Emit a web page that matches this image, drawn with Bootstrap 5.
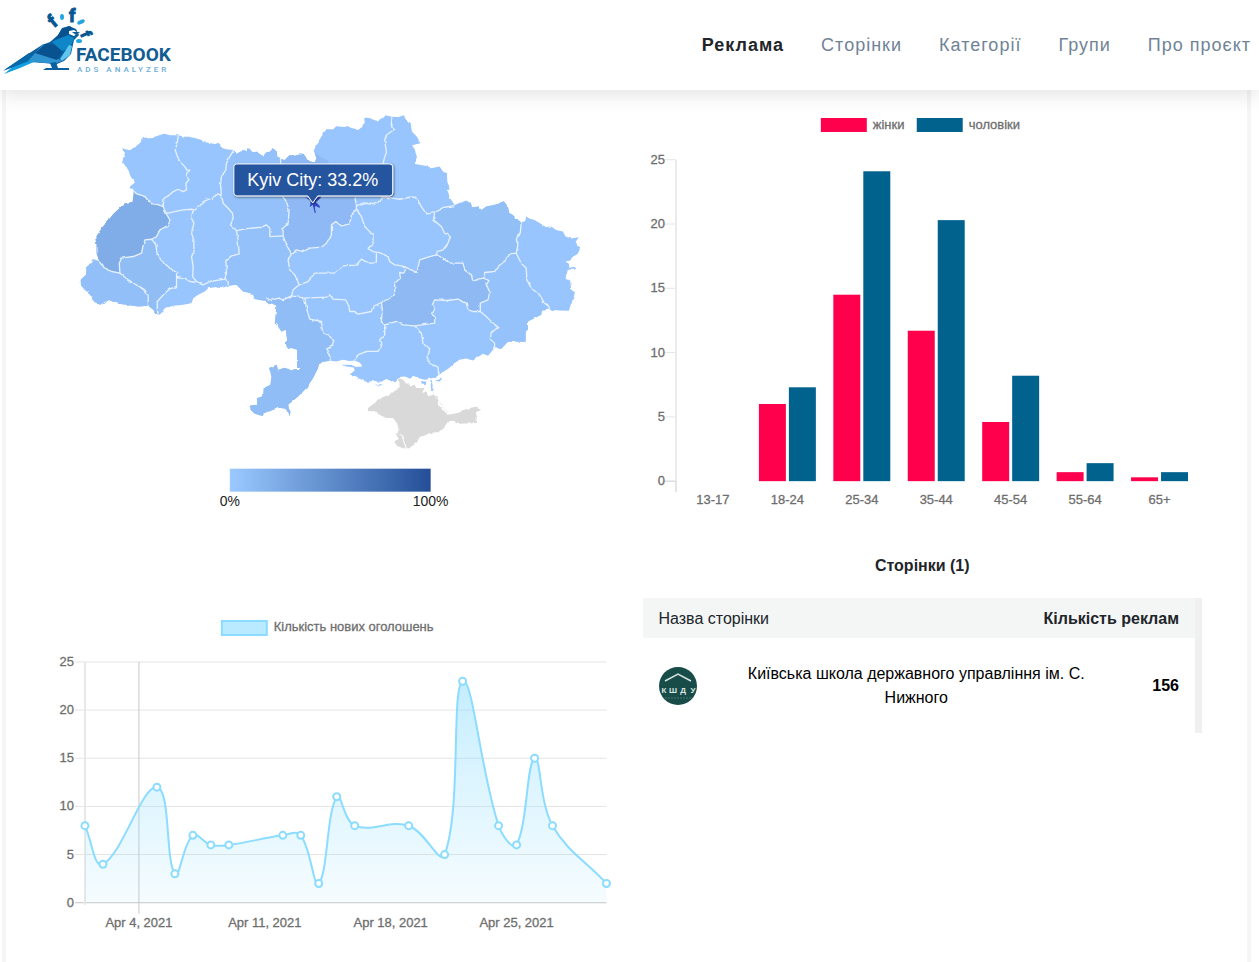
<!DOCTYPE html>
<html lang="uk">
<head>
<meta charset="utf-8">
<meta name="viewport" content="width=device-width, initial-scale=1">
<title>Facebook Ads Analyzer</title>
<link rel="stylesheet" href="https://cdn.jsdelivr.net/npm/bootstrap@5.3.0/dist/css/bootstrap.min.css">
<style>
body{font-family:"Liberation Sans",Arial,sans-serif;font-size:16px;color:#212529;background:#fff}
.site-header{min-height:90px;box-shadow:0 4px 20px rgba(0,0,0,.12);z-index:2}
.site-header .nav{gap:37px}
.site-header .nav-link{font-size:18px;line-height:24px;letter-spacing:1px;color:#708396}
.site-header .nav-link.active{color:#212529;font-weight:700}
.brand-art{width:176px;height:72px}
.page-body{margin:0 8px 0 2px;border:solid #f4f5f5;border-width:0 4px;padding:16px 45px 0}
.page-body .row{--bs-gutter-x:32px}
.chart{display:block;width:100%;height:auto;font-size:13px}
.axis-text{fill:#6e6e6e;stroke:#6e6e6e;stroke-width:.3}
.map-chart{margin-bottom:74px}
.pages-title{font-size:16px;line-height:24px;margin:34px 0 20px}
.pages-box{border-right:7px solid #f0f0f0}
.pages-table{table-layout:fixed;color:#000}
.pages-table th{background:#f4f6f6;padding:9px 16px 7px;line-height:24px;color:#212529}
.pages-table td{height:95px;padding:10px 8px 8px}
.pages-table td:first-child,.pages-table td:last-child{padding:10px 16px 8px}
.col-avatar{width:70px}.col-extra{width:100px}.col-count{width:75px}
</style>
<script src="https://cdn.jsdelivr.net/npm/bootstrap@5.3.0/dist/js/bootstrap.bundle.min.js"></script>
</head>
<body class="d-flex flex-column min-vh-100">
<header class="site-header d-flex align-items-center justify-content-between position-relative bg-white pe-2">
  <a href="#" aria-label="Facebook Ads Analyzer" class="pb-2">
    <svg class="brand-art d-block" viewBox="0 4 176 72">
      <path fill="#0b5f9e" d="M4 69 28 53 42 44 50 41 58 34 62 27 69 25 76 28 79 34 74 39 71 53 64 60 57 63 30 61Z"/>
      <path fill="#14a0e0" d="m4 73 23-19 9 6-16 7Z"/><path fill="#0868a8" d="m3 70 26-18 5 6Z"/>
      <path fill="#2f93cf" d="m28 60 15-17 12 13 7 4-8 3Z"/><path fill="#07528f" d="m35 52 10-9 20 2-8 14Z"/>
      <path fill="#0e86c8" d="m52 41 13-8 9 4-4 10-8 3Z"/><path fill="#5fc6f0" d="m60 58 9-14 3 1-2 9-8 6Z"/>
      <path fill="#07528f" d="m62 28 8-3 3 4-7 6-11 4Z"/>
      <path fill="#fff" d="m69 30 5-1 4 3-4 3-5-2Z"/><path fill="#0b5f9e" d="m72 31 8 0-4 3Z"/>
      <path fill="#0b5f9e" d="m50 62 6-1 2 6 11 0v2H43l3-2h6Z"/>
      <ellipse cx="62" cy="16" rx="2" ry="3" fill="#25a5e1"/><ellipse cx="81" cy="21" rx="4" ry="2" fill="#25a5e1" transform="rotate(-25 81 21)"/><ellipse cx="79" cy="40" rx="3" ry="2" fill="#25a5e1"/>
      <g fill="#075892" stroke="#075892" font-weight="700" font-family="Roboto, sans-serif">
        <text x="69" y="21" font-size="18">f</text>
        <text transform="translate(54 27) rotate(-40)" font-size="18">f</text>
        <text transform="translate(80 33) rotate(65)" font-size="15">f</text>
        <text x="76" y="60" font-size="19" fill="#125c92" stroke="none">FACEBOOK</text>
      </g>
      <text x="77" y="71" font-size="8" letter-spacing="3" fill="#6aaed9" font-family="Roboto, sans-serif" font-weight="500">ADS ANALYZER</text>
    </svg>
  </a>
  <nav class="nav">
    <a class="nav-link active p-0" href="#" aria-current="page">Реклама</a>
    <a class="nav-link p-0" href="#">Сторінки</a>
    <a class="nav-link p-0" href="#">Категорії</a>
    <a class="nav-link p-0" href="#">Групи</a>
    <a class="nav-link p-0" href="#">Про проєкт</a>
  </nav>
</header>

<main class="page-body flex-grow-1">
 <div class="row">
  <div class="col-6">
   <svg class="chart map-chart" viewBox="0 0 560 420" role="img" aria-label="Kyiv City: 33.2%">
    <defs>
     <clipPath id="country"><path id="outline" d="M157 115 175 120 185 120 200 108 213 96 215 85 235 82 255 80 270 75 285 71 300 76 325 76 345 80 360 80 375 84 395 90 415 98 435 102 450 98 453 113 470 118 492 120 500 132 520 120 532 124 537 114 548 127 560 125 572 134 580 141 588 128 600 125 611 114 620 125 623 136 632 147 645 150 660 135 672 138 690 134 705 136 713 150 722 155 735 157 740 145 732 122 738 105 750 88 762 68 770 58 790 58 800 49 825 51 850 54 865 60 878 50 885 38 883 22 900 25 920 32 940 25 948 16 967 20 985 22 1002 16 1012 30 1023 42 1027 65 1042 80 1052 100 1027 106 1035 118 1041 135 1038 162 1070 168 1088 174 1110 170 1120 185 1132 192 1133 215 1140 238 1134 242 1140 262 1155 285 1172 278 1190 272 1202 280 1210 292 1225 290 1236 300 1250 290 1270 286 1285 282 1302 273 1315 290 1318 305 1340 325 1355 338 1367 333 1370 320 1378 325 1395 330 1415 342 1430 352 1445 350 1460 360 1480 365 1488 380 1505 386 1528 382 1518 396 1532 415 1525 432 1508 442 1502 452 1488 455 1498 462 1500 475 1520 474 1515 480 1495 480 1488 505 1502 512 1505 540 1517 548 1505 580 1498 603 1470 602 1440 600 1417 602 1415 615 1375 635 1375 660 1368 670 1368 696 1340 695 1315 696 1295 717 1275 715 1255 738 1240 732 1210 752 1190 746 1170 750 1155 760 1135 778 1115 788 1102 800 1080 808 1065 810 1050 806 1030 798 1022 807 1005 800 990 802 975 820 960 812 950 808 935 816 915 814 890 816 875 810 860 800 840 794 855 782 852 773 830 770 818 765 845 766 860 772 877 770 877 762 855 752 840 754 818 750 800 755 782 753 760 756 747 762 745 775 730 805 710 835 685 860 655 885 658 898 662 905 660 920 655 905 645 896 625 894 605 902 582 912 578 919 555 912 542 900 540 888 552 886 562 886 562 865 580 860 582 835 602 825 605 800 598 775 620 765 625 780 645 774 665 782 675 778 693 778 682 770 682 720 665 715 652 718 648 700 652 695 648 660 635 665 625 650 615 640 618 610 620 588 605 580 595 585 590 572 580 572 555 568 550 555 535 552 515 540 500 525 475 528 455 535 435 532 415 535 405 545 385 555 370 565 365 580 340 585 310 588 285 595 270 615 258 612 250 600 235 588 205 590 170 585 145 582 115 570 90 585 72 575 65 560 50 545 33 527 32 510 48 495 50 475 68 448 78 450 88 455 80 430 80 405 76 385 95 355 130 312 165 280 188 276 192 245 180 230 195 218 182 200 175 180 157 155 165 140Z"/></clipPath>
     <linearGradient id="scale"><stop stop-color="#9bc9ff"/><stop offset="1" stop-color="#244f98"/></linearGradient>
     <filter id="tipshadow"><feDropShadow dx="1" dy="1" stdDeviation="1" flood-opacity=".5"/></filter>
     <!-- small irregularities of the administrative borders -->
     <filter id="rough" x="-2%" y="-2%" width="104%" height="104%" color-interpolation-filters="sRGB"><feTurbulence type="fractalNoise" baseFrequency=".2" numOctaves="1" seed="4" result="n"/><feDisplacementMap in="SourceGraphic" in2="n" scale="3" xChannelSelector="R" yChannelSelector="G"/></filter>
    </defs>
    <g filter="url(#rough)">
    <g transform="translate(19 4) scale(.33333)">
     <use href="#outline" fill="#98c5fe"/>
     <g clip-path="url(#country)">
      <path fill="#80ace8" d="M192 245 210 255 230 262 245 282 265 284 280 290 288 310 300 330 292 348 270 360 260 380 245 388 225 390 220 405 215 430 190 440 155 445 148 460 150 490 125 485 100 472 88 455 40 420V300L170 240Z"/>
      <path fill="#93bff8" d="M88 455 100 472 125 485 150 490 175 510 195 522 225 540 235 560 235 588V640H0V440Z"/>
      <path fill="#91bdf5" d="M150 490 148 460 155 445 190 440 215 430 220 405 225 390 245 388 258 405 262 435 275 452 300 475 320 488V530L300 537 280 555 262 575 262 600 265 630 235 588V560L225 540 195 522 175 510Z"/>
      <path fill="#94c1fa" d="M492 120 480 140 470 160 468 180 455 200 452 225 455 258 460 280 475 295 488 310 490 328 482 345 500 362 530 356 575 352 590 345 600 355V380L640 378 640 355 655 340 658 300 650 275 640 262 632 90H500Z"/>
      <path fill="#8eb9f4" d="M632 120V147L640 262 650 275 658 300 655 340 640 355V378L650 405 665 432 680 420 700 425 720 415 755 412 770 400 785 375 785 345 798 335 815 348 840 342 845 315 860 298 855 262 770 150 713 120Z"/>
      <path fill="#94c1fa" d="M500 362 505 395 508 432 485 438 468 452 470 490 465 508 475 526 500 545 590 580 605 572 625 565 640 570 665 558 670 540 688 525 675 495 660 480 655 450 665 432 650 405 640 378 600 380V355L590 345 575 352Z"/>
      <path fill="#91bdf6" d="M590 565 605 572 625 565 640 570 665 558 705 565 710 595 720 628 755 635 758 665 780 680 792 692 788 705 770 715 778 730 782 753 760 970H500V700Z"/>
      <path fill="#93bff7" d="M1155 287 1125 295 1095 308 1092 330 1115 350 1125 370 1142 380 1135 400 1120 420 1100 435 1120 445 1140 460 1180 460 1185 480 1205 495 1210 515 1225 508 1242 505 1245 488 1275 485 1285 470 1310 450 1320 432 1340 430 1345 405 1340 390 1352 370 1355 338 1310 240Z"/>
      <path fill="#8eb9f3" d="M1100 435 1080 440 1050 450 1042 488 1008 478 1002 490 990 488 992 505 975 520V555L935 578 938 600 935 635 945 645 980 635 1000 645 1035 648 1095 640 1095 620 1088 615 1095 595 1088 585 1095 570 1165 568 1190 580 1195 600 1210 605H1232V580L1255 570 1260 545 1250 525 1258 512 1242 505 1225 508 1210 515 1205 495 1185 480 1180 460 1140 460Z"/>
      <path fill="#95c2fb" d="M1242 505 1258 512 1250 525 1260 545 1255 570 1232 580V605L1250 620 1285 652 1265 670 1262 688 1275 725 1320 740 1450 650 1440 600 1425 580 1385 535 1372 510 1370 475 1340 430 1320 432 1285 470 1275 485 1245 488Z"/>
     </g>
     <g fill="none" stroke="#e6f1ff" stroke-width="4" stroke-linejoin="round">
      <path d="M325 76 322 100 316 120 322 138 330 155 345 170 352 182 360 180 350 195 357 210 348 220 350 240 340 245 325 238 310 245 295 258 282 265 280 290M192 245 210 255 230 262 245 282 265 284 280 290M492 120 480 140 470 160 468 180 455 200 452 225 455 255M288 310 300 308 340 300 365 298 375 300 390 288 400 275 425 265 445 252 455 258M280 290 288 310 300 330 292 348 270 360 260 380 245 388 225 390 220 405 215 430 190 440 155 445 148 460 150 490M88 455 100 472 125 485 150 490 175 510 195 522 225 540 235 560V588M370 298 365 325 372 340 365 370 372 390V430L365 440 370 470 368 500 380 515 400 525M245 388 258 405 262 435 275 452 300 475 320 488V530L300 537 280 555 262 575V600L265 612M320 500 345 505 360 515 380 518 400 525 420 515 465 508 475 515V526M455 258 460 280 475 295 488 310 490 328 482 345 500 362 505 395 508 432 485 438 468 452 470 490 465 508M500 362 530 356 575 352 590 345 600 355V380L640 378M632 147 640 262 650 275 658 300 655 340 640 355V378L650 405 665 432 655 450 660 480 675 495 688 525 670 540 665 558M665 432 680 420 700 425 720 415 755 412 770 400 785 375V345L798 335 815 348 840 342 845 315 860 298M688 525 715 515 735 490 795 490 820 468 860 466 875 448 895 460 920 460V430M590 565 605 572 625 565 640 570 665 558 705 565 770 562 780 555 790 568 828 570 838 590 840 605 855 605 865 613 905 605 910 590 935 578 970 560 975 552V520L992 505 990 488 1002 490 1008 478"/>
      <path transform="translate(390 510)" d="M315 55 320 85 330 118 365 125 368 155 390 170 402 182 398 195 380 205 388 220 392 243M545 68 548 90 545 125 555 135V165L540 180 545 200 535 215 500 215 475 225 465 240M555 135 590 125 610 135 645 138 705 130V110L698 105 705 85 698 75 705 60 745 62 775 58 800 70 805 90 820 95 842 95 860 110 880 130 895 142 875 160 872 178 885 190V205M645 138 665 160 670 190 690 210 682 232 690 250 715 262 717 285"/>
      <path transform="translate(780 0)" d="M452 605V580L475 570 480 545 470 525 478 512 462 505 445 508 430 515 425 495 405 480 400 460 360 460 340 445 320 435 300 440 270 450 262 488 245 480 228 472 215 468 195 465 180 455 175 440 150 428 130 425 112 415 130 405V375L105 350 95 320 80 298 80 285 75 262M462 505 465 488 495 485 505 470 530 450 540 432 560 430 565 405 560 390 572 370 575 338M560 430 575 460 590 475 592 510 605 535 630 555 645 580 658 590 660 600M375 287 345 292 315 308 312 330 335 350 345 370 362 380 355 400 340 420 322 425 320 435M315 308 290 312 275 290 260 262 240 262 210 268 185 264 160 262 150 275 130 284 110 280 95 285 80 285M187 20 185 45 195 58 170 75 165 90 170 125 160 160 155 262"/>
     </g>
     <path transform="translate(390 510)" fill="#d9d9d9" d="M597 294 600 320 590 330 570 345 550 352 535 362 505 385 503 394 525 395 545 408 560 415 580 415 592 430 598 455 592 462 597 478 580 487 595 500 610 506 628 506 650 490 660 475 690 460 717 457 735 440 745 425 760 422 780 432 828 430 832 410 828 398 845 390 825 382 800 388 775 400 745 405 735 395 715 375 714 350 700 345 685 350 680 335 668 340 672 325 650 325 645 315 630 320 630 310 620 312 610 300Z"/>
     <path transform="translate(390 510)" fill="none" stroke="#fff" stroke-width="3" d="M597 460 608 470 612 485 620 505"/>
     <path transform="translate(390 510)" fill="#98c5fe" d="M665 305 680 305 678 316 665 314ZM692 300 695 335 700 337 697 302ZM705 303 728 296 720 305ZM525 313 550 314 540 318ZM720 275 732 262 735 275Z"/>
     <path transform="translate(390 510)" fill="none" stroke="#eee" stroke-width="3" d="M698 335 715 362 748 403"/>
    </g>
    </g>
    <path fill="#3346c4" d="m254 91 6 2 3 0 7-3 0 2-5 4 4 4 0 2-4-2-1 1 1 6-1 0-2-8-3 2 1-6Z"/>
    <g filter="url(#tipshadow)"><path fill="#2755a0" stroke="#fff" d="M186 58H339q3 0 3 3V87q0 3-3 3H267l-5 7-5-7H186q-3 0-3-3V61q0-3 3-3Z"/></g>
    <text x="262" y="80" font-size="18" fill="#fff" text-anchor="middle">Kyiv City: 33.2%</text>
    <rect x="179" y="363" width="201" height="23" fill="url(#scale)"/>
    <g font-size="14" fill="#222" text-anchor="middle"><text x="179" y="400">0%</text><text x="380" y="400">100%</text></g>
   </svg>
   <svg class="chart" id="adsChart" viewBox="0 0 560 345" role="img" aria-label="Кількість нових оголошень"></svg>
  </div>
  <div class="col-6">
   <svg class="chart" id="ageChart" viewBox="0 0 560 414" role="img" aria-label="жінки, чоловіки"></svg>
   <h2 class="pages-title text-center fw-bold">Сторінки (1)</h2>
   <div class="pages-box">
    <table class="pages-table w-100 align-middle">
     <colgroup><col class="col-avatar"><col><col class="col-extra"><col class="col-count"></colgroup>
     <thead><tr><th colspan="2" class="fw-normal">Назва сторінки</th><th colspan="2" class="text-end">Кількість реклам</th></tr></thead>
     <tbody><tr>
      <td><svg class="d-block" width="38" height="38" viewBox="0 0 38 38"><circle cx="19" cy="19" r="19" fill="#174c48"/><path d="m6 14 13-7 13 7" fill="none" stroke="#d6e2e0" stroke-width="1.5"/><g fill="#dce6e4" font-size="8" font-weight="700" text-anchor="middle"><text x="5" y="26">К</text><text x="14" y="26">Ш</text><text x="24" y="26">Д</text><text x="34" y="26">У</text></g><path d="M6 31h26" stroke="#4b7672" stroke-dasharray="2 1"/></svg></td>
      <td colspan="2" class="text-center">Київська школа державного управління ім. С. Нижного</td>
      <td class="text-end fw-bold">156</td>
     </tr></tbody>
    </table>
   </div>
  </div>
 </div>
</main>
<script>
const text = (x, y, s, anchor) => `<text class="axis-text" x="${x}" y="${y}" text-anchor="${anchor}">${s}</text>`;
const line = (x1, y1, x2, y2, c, w = 1) => `<path d="M${x1} ${y1}L${x2} ${y2}" stroke="${c}" stroke-width="${w}"/>`;

// grouped bars: share of the audience by age and sex
(() => {
  const ages = ['13-17', '18-24', '25-34', '35-44', '45-54', '55-64', '65+'];
  const sets = [['#ff004d', [0, 6, 14.5, 11.7, 4.6, .7, .3]], ['#00628d', [0, 7.3, 24.1, 20.3, 8.2, 1.4, .7]]];
  const base = 375.5, unit = 12.87, Y = v => base - v * unit;
  let s = `<rect x="178" y="12" width="46" height="14" fill="#ff004d"/><rect x="274" y="12" width="46" height="14" fill="#00628d"/>`
    + text(230, 23, 'жінки', 'start') + text(326, 23, 'чоловіки', 'start');
  for (let v = 0; v <= 25; v += 5) s += line(22, Y(v), 33, Y(v), v ? '#e6e6e6' : '#ccc') + text(22, Y(v) + 4, v, 'end');
  s += line(33, Y(25), 33, base, '#ebebeb', 2) + line(33, base, 33, base + 11, '#ccc');
  ages.forEach((a, i) => {
    const c = 70 + i * 74.5;
    sets.forEach(([color, vals], k) => { s += `<rect x="${c - 28.5 + k * 30}" y="${Y(vals[i])}" width="27" height="${vals[i] * unit}" fill="${color}"/>`; });
    s += text(c, 398, a, 'middle');
  });
  ageChart.innerHTML = s;
})();

// smoothed area: new ads per day of April
(() => {
  const data = [[1,8],[2,4],[5,12],[6,3],[7,7],[8,6],[9,6],[12,7],[13,7],[14,2],[15,11],[16,8],[19,8],[21,5],[22,23],[24,8],[25,6],[26,15],[27,8],[30,2]];
  const X = d => 34 + (d - 1) * 18, Y = v => 303 - v * 9.64;
  const p = data.map(([d, v]) => [X(d), Y(v)]);
  const ctrl = p.map((c, i) => {
    const a = p[i - 1] || c, b = p[i + 1] || c;
    const da = Math.hypot(c[0] - a[0], c[1] - a[1]), db = Math.hypot(b[0] - c[0], b[1] - c[1]);
    const fa = .4 * da / (da + db), fb = .4 * db / (da + db);
    return [[c[0] - fa * (b[0] - a[0]), c[1] - fa * (b[1] - a[1])], [c[0] + fb * (b[0] - a[0]), c[1] + fb * (b[1] - a[1])]];
  });
  let d = `M${p[0]}`;
  for (let i = 1; i < p.length; i++) d += `C${ctrl[i - 1][1]} ${ctrl[i][0]} ${p[i]}`;
  let s = `<defs><linearGradient id="area" gradientUnits="userSpaceOnUse" x1="0" y1="60" x2="0" y2="303"><stop stop-color="#8bdcff" stop-opacity=".55"/><stop offset=".5" stop-color="#8bdcff" stop-opacity=".3"/><stop offset="1" stop-color="#8bdcff" stop-opacity=".08"/></linearGradient></defs>`
    + `<rect x="171" y="21" width="45" height="14" fill="#b9eaff" stroke="#8bdcff" stroke-width="2"/>` + text(223, 31, 'Кількість нових оголошень', 'start');
  for (let v = 0; v <= 25; v += 5) s += line(24, Y(v), 556, Y(v), v ? '#e4e4e4' : '#c5c5c5') + text(23, Y(v) + 4, v, 'end');
  s += line(34, Y(25), 34, Y(0) + 2, '#e8e8e8', 2) + line(88, Y(25), 88, Y(0) + 11, '#c8c8c8');
  [4, 11, 18, 25].forEach(n => { s += text(X(n), 327, `Apr ${n}, 2021`, 'middle'); });
  s += `<path d="${d}V${Y(0)}H34Z" fill="url(#area)"/><path d="${d}" fill="none" stroke="#8bdcff" stroke-width="2"/>`;
  p.forEach(([x, y]) => { s += `<circle cx="${x}" cy="${y}" r="3.5" fill="#fff" stroke="#8bdcff" stroke-width="2"/>`; });
  adsChart.innerHTML = s;
})();
</script>
</body>
</html>
